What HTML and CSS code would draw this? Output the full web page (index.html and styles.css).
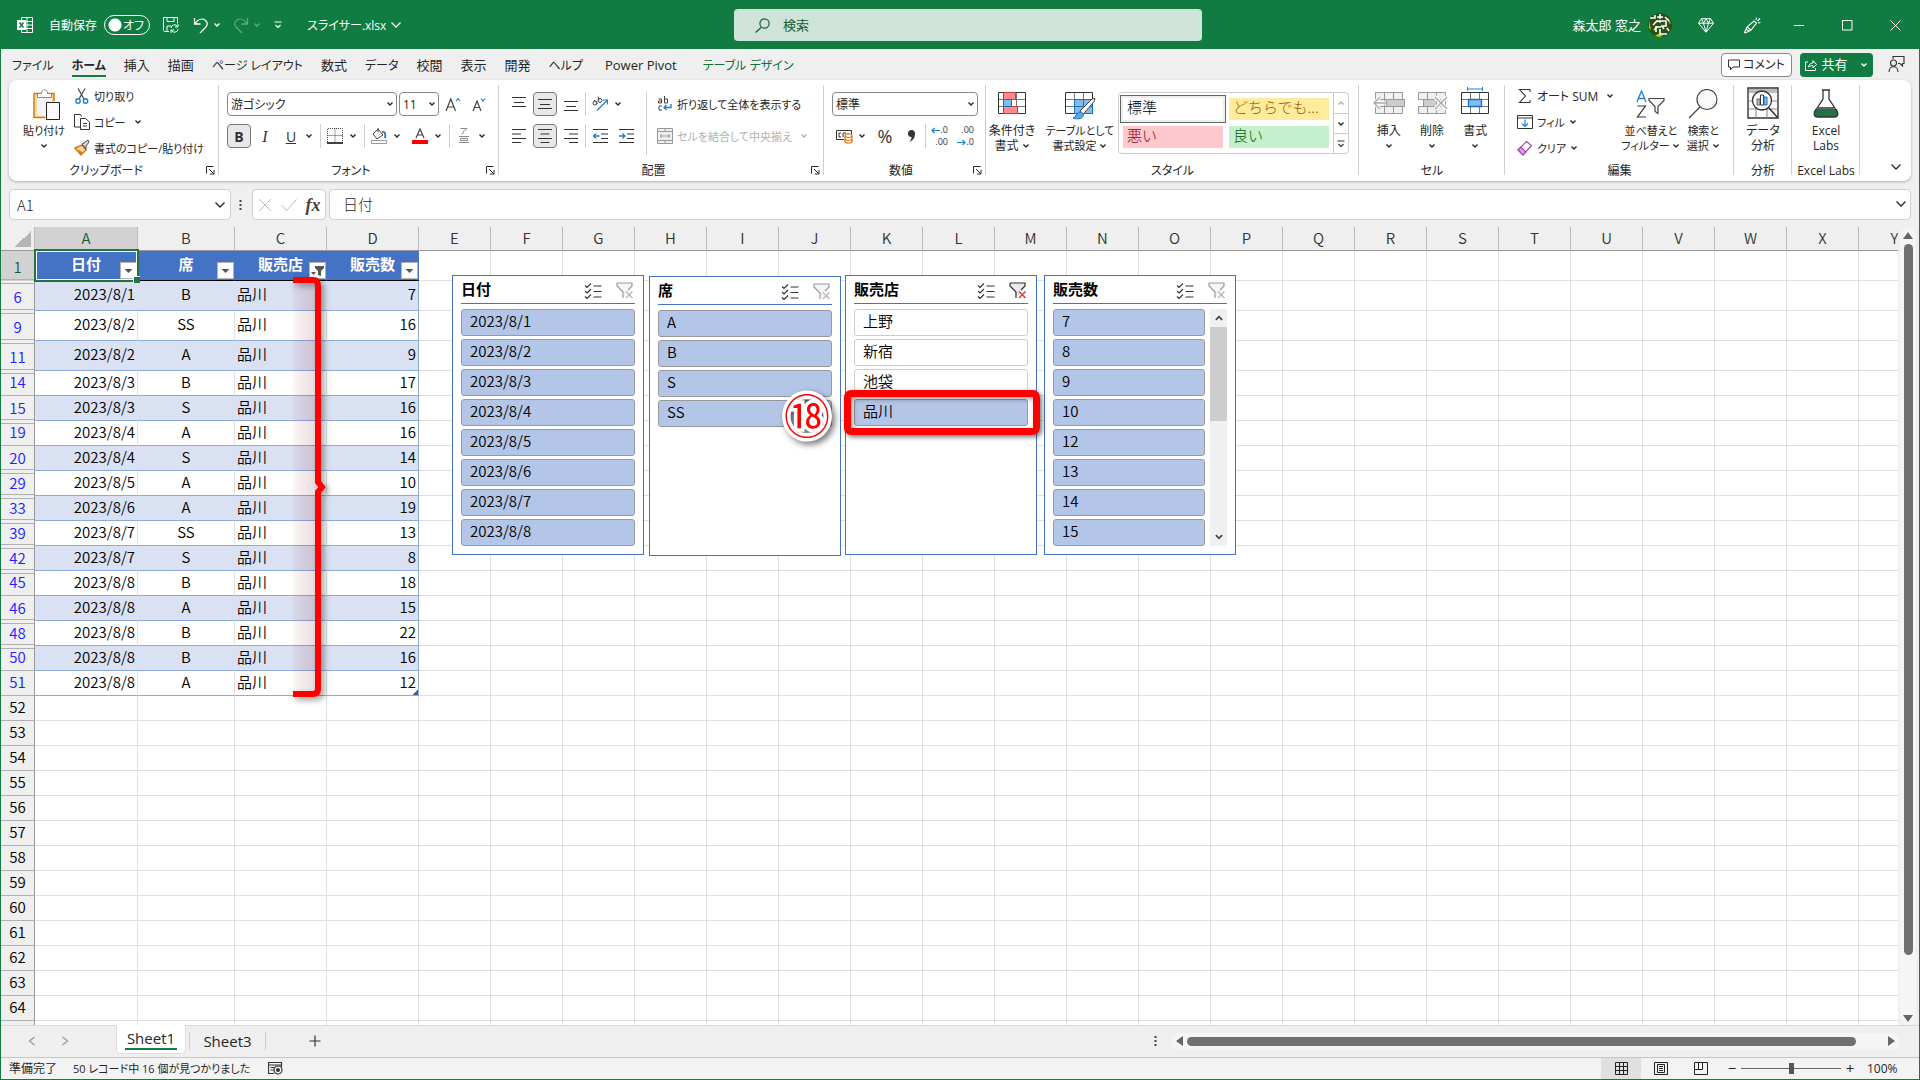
FILE: index.html
```html
<!DOCTYPE html>
<html lang="ja">
<head>
<meta charset="utf-8">
<title>スライサー.xlsx - Excel</title>
<link rel="stylesheet" href="styles.css">
</head>
<body>
<svg class="sprite" aria-hidden="true">
  <symbol id="chev" viewBox="0 0 8 8"><path d="M1.5 2.5 4 5l2.500-2.500" fill="none" stroke="currentColor" stroke-width="1.400"/></symbol>
  <symbol id="chev-lg" viewBox="0 0 12 12"><path d="M1.500 3.500 6 8l4.500-4.500" fill="none" stroke="currentColor" stroke-width="1.300"/></symbol>
  <symbol id="launch" viewBox="0 0 9 9"><path d="M.5 7.500V.5h7M3 3l4.500 4.500M8 4v4H4" fill="none" stroke="currentColor"/></symbol>
  <symbol id="check-list" viewBox="0 0 18 16"><path d="M1 3l2 2 4-4M1 8.500l2 2 4-4M1 14l2 2 4-4M9.500 3.500h8M9.500 9h8M9.500 14.500h8" fill="none" stroke="#333" stroke-width="1.100"/></symbol>
  <symbol id="clear-filter" viewBox="0 0 18 17"><path d="M1 1h15v3l-4 4M1 1v3l6 6v6" fill="none" stroke="currentColor" stroke-width="1.200"/><path d="M1 1h15v3l-5 5v3l-4 2v-4L1 4z" fill="currentColor" opacity=".1"/><path class="x" d="M10 9.500l6.500 6.500M16.500 9.500L10 16" fill="none" stroke-width="1.500"/></symbol>
  <symbol id="table-grid" viewBox="0 0 28 23"><path d="M.5.5h27v21H.5z" fill="#fff"/><path d="M9.500.5v21M18.500.5v21M.5 7.500h27M.5 14.500h27" stroke="#777" fill="none"/><path d="M.5.500h27v21H.5z" fill="none" stroke="#333"/></symbol>
</svg>

<header class="titlebar">
  <div class="title-left">
    <svg class="app" width="16" height="16" viewBox="0 0 16 16"><path d="M4.500.5h11v15h-11zM10 .5v15M4.500 4.500h11M4.500 8h11M4.500 11.500h11" fill="none" stroke="#fff"/><path d="M0 3h9v10H0z" fill="#fff"/><path d="M2.500 5.500l4 5M6.500 5.500l-4 5" stroke="#107c41" stroke-width="1.500"/></svg>
    <label class="autosave">自動保存 <input type="checkbox" role="switch"><span class="switch">オフ</span></label>
    <button class="tb save" aria-label="保存"><svg width="16" height="16" viewBox="0 0 16 16"><path d="M6 14.500H1.500L.5 13.500V.5h14v6M4 .5v4h7v-4M4 14V9h4M8 11a3.500 3.500 0 0 1 6.500-1.500M15 7v3h-3M15 12a3.500 3.500 0 0 1-6.500 1.500M8 16v-3h3" fill="none" stroke="#fff"/></svg></button>
    <button class="tb undo" aria-label="元に戻す"><svg width="16" height="17" viewBox="0 0 16 17"><path d="M1.500 1v6h6M2 6.500C5 2.500 9 1 12 3s3 5 0 8l-5 5" fill="none" stroke="#fff" stroke-width="1.300"/></svg><svg width="8" height="8"><use href="#chev"/></svg></button>
    <button class="tb undo dim" aria-label="やり直し"><svg width="16" height="17" viewBox="0 0 16 17"><path d="M14.500 1v6h-6M14 6.500C11 2.500 7 1 4 3s-3 5 0 8l5 5" fill="none" stroke="currentColor" stroke-width="1.300"/></svg><svg width="8" height="8"><use href="#chev"/></svg></button>
    <button class="tb" aria-label="カスタマイズ"><svg width="8" height="8" viewBox="0 0 8 8"><path d="M.5 1h7M1.500 4L4 6.500 6.500 4" fill="none" stroke="#fff" stroke-width="1.200"/></svg></button>
    <button class="tb filename">スライサー.xlsx <svg width="12" height="12"><use href="#chev-lg"/></svg></button>
  </div>
  <label class="search"><svg width="15" height="15" viewBox="0 0 15 15"><path d="M6 9.500L.7 14.500" stroke="#185c37" stroke-width="1.200"/><circle cx="9.500" cy="5.500" r="4.600" fill="none" stroke="#185c37" stroke-width="1.200"/></svg><input type="search" placeholder="検索" aria-label="検索"></label>
  <div class="title-right">
    <span class="user">森太郎 窓之</span>
    <svg class="avatar" width="24" height="24" viewBox="0 0 24 24"><circle cx="12" cy="12" r="12" fill="#2c4f14"/><path d="M1 7l2 10-2-2zM20 4l3 7-2-1zM7 23l3-2 5 1-3 2z" fill="#a5e000"/><path d="M2 5h5V2M9 4h6M12 1v5M5 12l4-4 4 1M9 8h9v5h-5M17 4l4 4M6 17l3-3h4M8 13v6M12 16v5h7M14 13l2 3M19 15l2 3" fill="none" stroke="#fff" stroke-width="1.600"/></svg>
    <button class="cap" aria-label="Premium"><svg width="16" height="15" viewBox="0 0 16 15"><path d="M3.500.7h9l3 4.500L8 14.300.5 5.200zM.5 5.200h15M3.500.7l2 4.500L8 14l2.500-8.800 2-4.500M5.500 5.200L8 .7l2.500 4.500" fill="none" stroke="#fff"/></svg></button>
    <button class="cap" aria-label="描画ツール"><svg width="18" height="17" viewBox="0 0 18 17"><path d="M1.500 15.500L4 10l7-6 2.500 2L8 13l-5.500 3zM4 10l4 3M3.500 12.500l3 2M13 3l.5-2.500M14.500 4L17 1.500M15 6l2.500-.5" fill="none" stroke="#fff" stroke-width="1.100"/></svg></button>
    <button class="cap" aria-label="最小化"><svg width="11" height="11" viewBox="0 0 11 11"><path d="M0 5.500h10" stroke="#fff"/></svg></button>
    <button class="cap" aria-label="元のサイズ"><svg width="11" height="11" viewBox="0 0 11 11"><path d="M.5.5h9.500v9.500H.5z" fill="none" stroke="#fff"/></svg></button>
    <button class="cap" aria-label="閉じる"><svg width="11" height="11" viewBox="0 0 11 11"><path d="M.5.5l10 10M10.500.5l-10 10" stroke="#fff"/></svg></button>
  </div>
</header>

<nav class="tabs">
  <a href="#" class="kana">ファイル</a><a href="#" class="kana on">ホーム</a><a href="#">挿入</a><a href="#">描画</a><a href="#" class="kana">ページ レイアウト</a><a href="#">数式</a><a href="#" class="kana">データ</a><a href="#">校閲</a><a href="#">表示</a><a href="#">開発</a><a href="#" class="kana">ヘルプ</a><a href="#" class="latin">Power Pivot</a><a href="#" class="kana ctx">テーブル デザイン</a>
  <div class="tab-actions">
    <button class="comment"><svg width="12" height="12" viewBox="0 0 12 12"><path d="M.5 1h11v7H5l-2.500 3V8h-2z" fill="none" stroke="#333"/></svg>コメント</button>
    <button class="share"><svg width="12" height="12" viewBox="0 0 12 12"><path d="M3 3H.5v8.500h10V9M3.500 8C4 5 6 4 8 4V1.500l3.500 4L8 9V6.500C6 6.500 5 7 3.500 8z" fill="none" stroke="#fff"/></svg><span>共有</span><svg width="8" height="8"><use href="#chev"/></svg></button>
    <button class="persona" aria-label="プレゼンス"><svg width="17" height="17" viewBox="0 0 17 17"><path d="M5 3V.5h11v7h-1.500V10L12 7.500h-2M1 16c0-7 9-7 9 0" fill="none" stroke="#333" stroke-width="1.100"/><circle cx="5.500" cy="7" r="3" fill="none" stroke="#333" stroke-width="1.100"/></svg></button>
  </div>
</nav>

<section class="ribbon">
  <div class="group g-clip">
    <div class="body">
      <button class="big paste"><svg width="28" height="32" viewBox="0 0 28 32"><path d="M1.500 5h20v24h-20z" fill="#f8dc9c"/><path d="M4 8h15v19H4z" fill="#f4f4f4"/><path d="M1 4.500h20V12M1 4.500v24h11" fill="none" stroke="#d9730a" stroke-width="1.500"/><path d="M4.500 8.500V4.500h4c0-5 6-5 6 0h4v4z" fill="#fff" stroke="#888"/><path d="M13.500 13.500h13v17h-13z" fill="#fafafa" stroke="#222"/></svg>貼り付け<svg width="8" height="8"><use href="#chev"/></svg></button>
      <div class="stack">
        <button class="row"><svg width="16" height="16" viewBox="0 0 16 16"><path d="M4 .5l6 10.500M11 .5L5 11" stroke="#444" stroke-width="1.200"/><circle cx="4" cy="13" r="2.200" fill="none" stroke="#1a82d2" stroke-width="1.400"/><circle cx="11.500" cy="13" r="2.200" fill="none" stroke="#1a82d2" stroke-width="1.400"/></svg>切り取り</button>
        <button class="row"><svg width="16" height="16" viewBox="0 0 16 16"><path d="M6 13H.5V.5h6l1 2M6.500 4.500h5l4 3.500v7.500h-9zM9 9.500h4M9 12h4" fill="none" stroke="#333"/></svg>コピー<svg class="far" width="8" height="8"><use href="#chev"/></svg></button>
        <button class="row"><svg width="16" height="16" viewBox="0 0 16 16"><path d="M1 8l7-3 4 5-5 5z" fill="#fbd9ae" stroke="#d9730a" stroke-width="1.400"/><path d="M4 9l5 4-3 2z" fill="#e07a10"/><path d="M8 4l2-1 4-3 1 2-3 4v3z" fill="#ddd" stroke="#444"/></svg>書式のコピー/貼り付け</button>
      </div>
    </div>
    <div class="label l">クリップボード<svg width="9" height="9"><use href="#launch"/></svg></div>
  </div>

  <div class="group g-font">
    <div class="body lines">
      <div class="line">
        <span class="combo w-font"><select aria-label="フォント"><option>游ゴシック</option></select><svg width="8" height="8"><use href="#chev"/></svg></span>
        <span class="combo w-size"><select aria-label="サイズ"><option>11</option></select><svg width="8" height="8"><use href="#chev"/></svg></span>
        <button class="ic" aria-label="拡大"><svg width="16" height="15" viewBox="0 0 16 15"><path d="M1 14L5.800 2 10.500 14M2.800 10h6" fill="none" stroke="#444" stroke-width="1.200"/><path d="M11 4l2-2.500L15 4" fill="none" stroke="#1a82d2" stroke-width="1.200"/></svg></button>
        <button class="ic" aria-label="縮小"><svg width="16" height="15" viewBox="0 0 16 15"><path d="M2 14L6 4l4 10M3.500 10.500h5" fill="none" stroke="#444" stroke-width="1.200"/><path d="M10 1.500L12 4l2-2.500" fill="none" stroke="#1a82d2" stroke-width="1.200"/></svg></button>
      </div>
      <div class="line">
        <button class="ic on"><b>B</b></button><button class="ic"><i>I</i></button><button class="ic"><u>U</u></button><button class="dd" aria-label="下線"><svg width="8" height="8"><use href="#chev"/></svg></button><hr>
        <button class="ic" aria-label="罫線"><svg width="16" height="16" viewBox="0 0 16 16"><path d="M.5 14V.5h15V14M8 .5V14M.5 7.500h15" fill="none" stroke="#444" stroke-dasharray="1 1"/><path d="M0 15h16" stroke="#000" stroke-width="1.500"/></svg></button><button class="dd" aria-label="罫線の種類"><svg width="8" height="8"><use href="#chev"/></svg></button><hr>
        <button class="ic" aria-label="塗りつぶし"><svg width="16" height="18" viewBox="0 0 16 18"><path d="M7 2l5 6-6 4-4-5zM7 5V1" fill="#f4f4f4" stroke="#444"/><path d="M11 5c3-1 4 2 3 6" fill="none" stroke="#1a6fc0" stroke-width="1.800"/><path d="M.5 13.500h15v3H.5z" fill="#fff" stroke="#999"/></svg></button><button class="dd" aria-label="塗りつぶしの色"><svg width="8" height="8"><use href="#chev"/></svg></button>
        <button class="ic gap" aria-label="フォントの色"><svg width="16" height="18" viewBox="0 0 16 18"><path d="M4 11L8 2l4 9M5.500 8h5" fill="none" stroke="#444" stroke-width="1.200"/><path d="M0 13h16v4H0z" fill="#f00"/></svg></button><button class="dd" aria-label="文字色"><svg width="8" height="8"><use href="#chev"/></svg></button><hr>
        <button class="ic" aria-label="ふりがな"><svg width="12" height="18" viewBox="0 0 12 18"><path d="M2.500 1.500h6.500L6.500 4M6 3.500Q6 6 3.500 7.500M1 9.500h10M2.500 11.500h7v2h-7zM1 15.500h10" fill="none" stroke="#888"/></svg></button><button class="dd" aria-label="ふりがなの設定"><svg width="8" height="8"><use href="#chev"/></svg></button>
      </div>
    </div>
    <div class="label l">フォント<svg width="9" height="9"><use href="#launch"/></svg></div>
  </div>

  <div class="group g-align">
    <div class="body">
      <div class="lines">
        <div class="line">
          <button class="ic" aria-label="上揃え"><svg width="14" height="14" viewBox="0 0 14 14"><path d="M0 .5h14M2 5.500h10M0 9.500h14" stroke="#333"/></svg></button><button class="ic on" aria-label="上下中央揃え"><svg width="14" height="14" viewBox="0 0 14 14"><path d="M0 2.500h14M2 7.500h10M0 11.500h14" stroke="#333"/></svg></button><button class="ic" aria-label="下揃え"><svg width="14" height="14" viewBox="0 0 14 14"><path d="M0 4.500h14M2 9.500h10M0 13.500h14" stroke="#333"/></svg></button><hr>
          <button class="ic" aria-label="方向"><svg width="16" height="16" viewBox="0 0 16 16"><path d="M5 14.500L15 4.500M11 4h4.500v4.500" fill="none" stroke="#1a82d2" stroke-width="1.200"/><circle cx="3" cy="7" r="2" fill="none" stroke="#444"/><circle cx="8" cy="4.500" r="2" fill="none" stroke="#444"/><path d="M2 4l3.500 4M6 .5l1 4" stroke="#444"/></svg></button><button class="dd" aria-label="方向の種類"><svg width="8" height="8"><use href="#chev"/></svg></button>
        </div>
        <div class="line">
          <button class="ic" aria-label="左揃え"><svg width="14" height="14" viewBox="0 0 14 14"><path d="M0 .5h14M0 5h9M0 9.500h14M0 13.500h9" stroke="#333"/></svg></button><button class="ic on" aria-label="中央揃え"><svg width="14" height="14" viewBox="0 0 14 14"><path d="M0 .5h14M2.500 5h9M0 9.500h14M2.500 13.500h9" stroke="#333"/></svg></button><button class="ic" aria-label="右揃え"><svg width="14" height="14" viewBox="0 0 14 14"><path d="M0 .5h14M5 5h9M0 9.500h14M5 13.500h9" stroke="#333"/></svg></button><hr>
          <button class="ic" aria-label="インデントを減らす"><svg width="15" height="14" viewBox="0 0 15 14"><path d="M0 .5h15M8 5h7M8 9.500h7M0 13.500h15" stroke="#333"/><path d="M6.500 7h-6M3 4.500L.5 7 3 9.500" fill="none" stroke="#1a82d2" stroke-width="1.300"/></svg></button><button class="ic" aria-label="インデントを増やす"><svg width="15" height="14" viewBox="0 0 15 14"><path d="M0 .5h15M8 5h7M8 9.500h7M0 13.500h15" stroke="#333"/><path d="M0 7h6M3.500 4.500L6 7 3.500 9.500" fill="none" stroke="#1a82d2" stroke-width="1.300"/></svg></button>
        </div>
      </div>
      <div class="lines wrap">
        <button class="row"><svg width="16" height="16" viewBox="0 0 16 16"><path d="M1.500 3h3v4h-3V5h3M7.500 0v7h3V3h-3M5 10H2v4h3" fill="none" stroke="#444"/><path d="M14 8v3.500H7M9.500 9L7 11.500 9.500 14" fill="none" stroke="#1a82d2" stroke-width="1.400"/></svg>折り返して全体を表示する</button>
        <button class="row" disabled><svg width="16" height="16" viewBox="0 0 16 16"><path d="M.5.5h15v15H.5zM.5 3.500h15M.5 12.500h15M8 .5v3M8 12.500v3M3 8h10M5 6L3 8l2 2M11 6l2 2-2 2" fill="#eee" stroke="#999"/></svg>セルを結合して中央揃え<svg class="near" width="8" height="8"><use href="#chev"/></svg></button>
      </div>
    </div>
    <div class="label l">配置<svg width="9" height="9"><use href="#launch"/></svg></div>
  </div>

  <div class="group g-num">
    <div class="body lines">
      <div class="line"><span class="combo w-num"><select aria-label="表示形式"><option>標準</option></select><svg width="8" height="8"><use href="#chev"/></svg></span></div>
      <div class="line">
        <button class="ic" aria-label="通貨"><svg width="17" height="15" viewBox="0 0 17 15"><path d="M8 10.500H.5v-9h15V5M5 4H3v4h2M7 8V4h3M12 4v1" fill="none" stroke="#333"/><path d="M9 6.500c0-2 7-2 7 0v6c0 2-7 2-7 0zM9 7c1 2 6 2 7 0M9 10c1 2 6 2 7 0" fill="#fff" stroke="#e07000" stroke-width="1.200"/></svg></button><button class="dd" aria-label="通貨の種類"><svg width="8" height="8"><use href="#chev"/></svg></button>
        <button class="ic gap pct">%</button><button class="ic" aria-label="桁区切り"><svg width="9" height="14" viewBox="0 0 9 14"><path d="M1.500 13c2-1 3-2.500 3-5A3.500 3.500 0 1 1 8 4.500C8 9 6 12 1.500 13z" fill="#333"/></svg></button><hr>
        <button class="ic dec"><span><svg width="9" height="7" viewBox="0 0 9 7"><path d="M9 3.500H1M3.500 1L1 3.500 3.500 6" fill="none" stroke="#1a82d2" stroke-width="1.200"/></svg>.0</span><span>.00</span></button><button class="ic dec"><span>.00</span><span><svg width="9" height="7" viewBox="0 0 9 7"><path d="M0 3.500h8M5.500 1L8 3.500 5.500 6" fill="none" stroke="#1a82d2" stroke-width="1.200"/></svg>.0</span></button>
      </div>
    </div>
    <div class="label l">数値<svg width="9" height="9"><use href="#launch"/></svg></div>
  </div>

  <div class="group g-style">
    <div class="body">
      <button class="big cond"><svg width="28" height="23" viewBox="0 0 28 23"><use href="#table-grid"/><path d="M5.500.5h12v7h-12zM5.500 14.500h14v7h-14z" fill="#ff8a90" stroke="#d13438"/><path d="M5.500 7.500h8v7h-8z" fill="#83bdec" stroke="#1a6fc0"/></svg><span>条件付き<br>書式 <svg width="8" height="8"><use href="#chev"/></svg></span></button>
      <button class="big fmt"><svg width="31" height="28" viewBox="0 0 31 28"><svg width="28" height="23"><use href="#table-grid"/></svg><path d="M9.500 7.500h18v14h-18z" fill="#83bdec" stroke="#1a6fc0"/><path d="M18.500 7v15M9 14.500h18" stroke="#1a6fc0"/><path d="M15 19L27 7l3-.500-1 3-11 13z" fill="#fff" stroke="#444"/><path d="M8 26c3 0 3-6 7-6s5 5 0 6.500c-2 .5-5 .5-7-.5z" fill="#5aa7e6" stroke="#1a6fc0"/></svg><span>テーブルとして<br>書式設定 <svg width="8" height="8"><use href="#chev"/></svg></span></button>
      <div class="gallery">
        <div class="swatches"><button class="s-norm">標準</button><button class="s-neu">どちらでも...</button><button class="s-bad">悪い</button><button class="s-good">良い</button></div>
        <div class="gal-nav"><button class="dim" aria-label="上へ"><svg class="flip" width="8" height="8"><use href="#chev"/></svg></button><button aria-label="下へ"><svg width="8" height="8"><use href="#chev"/></svg></button><button aria-label="その他"><svg width="8" height="8" viewBox="0 0 8 8"><path d="M.5 1h7M1.500 4L4 6.500 6.500 4" fill="none" stroke="#333" stroke-width="1.200"/></svg></button></div>
      </div>
    </div>
    <div class="label">スタイル</div>
  </div>

  <div class="group g-cell">
    <div class="body">
      <button class="big cell"><svg width="32" height="23" viewBox="0 0 32 23"><path d="M2.500.5h27v21h-27zM11.500.5v21M20.500.5v21M2.500 7.500h27M2.500 14.500h27" fill="#f0f0f0" stroke="#999"/><path d="M13.500 7.500h18v7h-18z" fill="#ccc" stroke="#999"/><path d="M13 11H1M7 5l-6 6 6 6" fill="none" stroke="#fff" stroke-width="3.500"/><path d="M13 11H1.500M7 5l-6 6 6 6" fill="none" stroke="#aaa" stroke-width="1.500"/></svg>挿入<svg width="8" height="8"><use href="#chev"/></svg></button>
      <button class="big cell"><svg width="32" height="23" viewBox="0 0 32 23"><path d="M2.500.5h27v21h-27zM11.500.5v21M20.500.5v21M2.500 7.500h27M2.500 14.500h27" fill="#f0f0f0" stroke="#999"/><path d="M0 8h7v6H0z" fill="#fff"/><path d="M7.500 7.500h13v7h-13z" fill="#ccc" stroke="#999"/><path d="M19 5l12 12M31 5L19 17" stroke="#fff" stroke-width="4"/><path d="M19 5l12 12M31 5L19 17" stroke="#aaa" stroke-width="1.500"/></svg>削除<svg width="8" height="8"><use href="#chev"/></svg></button>
      <button class="big cell tall"><svg width="28" height="28" viewBox="0 0 28 28"><path d="M6.500 2h15M6.500 0v4M21.500 0v4" stroke="#1a82d2"/><svg y="5" width="28" height="23"><use href="#table-grid"/></svg><path d="M7.500 12.500h13v7h-13z" fill="#83bdec" stroke="#1a6fc0" stroke-width="1.300"/></svg>書式<svg width="8" height="8"><use href="#chev"/></svg></button>
    </div>
    <div class="label">セル</div>
  </div>

  <div class="group g-edit">
    <div class="body">
      <div class="stack">
        <button class="row"><svg width="16" height="16" viewBox="0 0 16 16"><path d="M13 4V1.500H2.500L8.500 8l-6 6.500H13V12" fill="none" stroke="#333" stroke-width="1.100"/></svg><span class="sum">オート SUM</span><svg class="far" width="8" height="8"><use href="#chev"/></svg></button>
        <button class="row"><svg width="16" height="16" viewBox="0 0 16 16"><path d="M.5 1.500h15v13H.5zM.5 4h15" fill="none" stroke="#333"/><path d="M8 5.500v7M5 9.500l3 3 3-3" fill="none" stroke="#1a82d2" stroke-width="1.200"/></svg>フィル<svg width="8" height="8"><use href="#chev"/></svg></button>
        <button class="row"><svg width="16" height="16" viewBox="0 0 16 16"><path d="M1 10L9.500 1.500l5 4L6 15z" fill="#fff" stroke="#a347b0" stroke-width="1.200"/><path d="M1 10l3-3 5 5-3 3z" fill="#d99fe0" stroke="#a347b0" stroke-width="1.200"/></svg>クリア<svg width="8" height="8"><use href="#chev"/></svg></button>
      </div>
      <button class="big sort"><svg width="29" height="28" viewBox="0 0 29 28"><path d="M1 12L5.500 1 10 12M2.500 8.500h6" fill="none" stroke="#1a82d2" stroke-width="1.300"/><path d="M1.500 16h8l-8 11h8.500" fill="none" stroke="#333" stroke-width="1.200"/><path d="M13 8.500h15v2l-6 6v7l-3-2v-5l-6-6z" fill="#fafafa" stroke="#444" stroke-width="1.200"/></svg><span>並べ替えと<br>フィルター <svg width="8" height="8"><use href="#chev"/></svg></span></button>
      <button class="big find"><svg width="30" height="30" viewBox="0 0 30 30"><circle cx="19" cy="10.500" r="10" fill="#fafafa" stroke="#444" stroke-width="1.200"/><path d="M12 18L1 29" stroke="#444" stroke-width="1.300"/></svg><span>検索と<br>選択 <svg width="8" height="8"><use href="#chev"/></svg></span></button>
    </div>
    <div class="label">編集</div>
  </div>

  <div class="group g-an">
    <div class="body"><button class="big an"><svg width="32" height="32" viewBox="0 0 32 32"><path d="M1 1h30v30H1z" fill="#fafafa" stroke="#333" stroke-width="1.400"/><path d="M2 2h28v4H2z" fill="#bbb"/><path d="M1 14h30M1 22h30M9 6v25M20 6v25" stroke="#888"/><circle cx="15" cy="13.500" r="9.500" fill="#fff" stroke="#333" stroke-width="1.300"/><path d="M10 12h3v6h-3z" fill="#bbb" stroke="#666"/><path d="M13.500 8h3v10h-3z" fill="#fff" stroke="#333"/><path d="M17 10h3v8h-3z" fill="#83bdec" stroke="#1a6fc0"/><path d="M22 21l9 10" stroke="#333" stroke-width="1.500"/></svg><span>データ<br>分析</span></button></div>
    <div class="label">分析</div>
  </div>
  <div class="group g-labs">
    <div class="body"><button class="big an"><svg width="26" height="30" viewBox="0 0 26 30"><path d="M2 20h22l1 5c0 2-1 3-3 3H4c-2 0-3-1-3-3z" fill="#217346"/><path d="M9 1h8M10 1v9L1.500 23c-1 3 0 5 3 5h17c3 0 4-2 3-5L16 10V1M5 19h16" fill="none" stroke="#333" stroke-width="1.300"/></svg><span>Excel<br>Labs</span></button></div>
    <div class="label">Excel Labs</div>
  </div>
  <button class="collapse" aria-label="リボンを折りたたむ"><svg width="12" height="12"><use href="#chev-lg"/></svg></button>
</section>

<section class="formula">
  <label class="namebox"><input value="A1" aria-label="名前ボックス"><svg width="12" height="12"><use href="#chev-lg"/></svg></label>
  <svg width="3" height="12" viewBox="0 0 3 12"><path d="M.5 1h2v2h-2zM.5 5h2v2h-2zM.5 9h2v2h-2z" fill="#444"/></svg>
  <div class="fx">
    <button aria-label="キャンセル"><svg width="14" height="14" viewBox="0 0 14 14"><path d="M1 1l12 12M13 1L1 13" stroke="#bbb"/></svg></button>
    <button aria-label="入力"><svg width="16" height="12" viewBox="0 0 16 12"><path d="M.5 6l5 5.500L15.500.5" fill="none" stroke="#bbb"/></svg></button>
    <button class="fxb">fx</button>
  </div>
  <label class="fbar"><input value="日付" aria-label="数式バー"><svg width="12" height="12"><use href="#chev-lg"/></svg></label>
</section>

<main class="work">
  <div class="canvas">
    <table class="sheet"><colgroup></colgroup><thead></thead><tbody></tbody></table>
    <div class="active"></div>
    <svg class="bracket" width="40" height="440" viewBox="0 0 40 440">
      <defs><linearGradient id="pink"><stop offset="0" stop-color="#c00000" stop-opacity=".04"/><stop offset="1" stop-color="#900020" stop-opacity=".1"/></linearGradient></defs>
      <path d="M0 6h24v412H0z" fill="url(#pink)"/>
      <path d="M0 3h20q5 0 5 6v196l4 5-4 5v197q0 5-5 5H0" fill="none" stroke="#f00" stroke-width="6"/>
    </svg>
    <section class="slicer s1"><h2>日付</h2></section>
    <section class="slicer s2"><h2>席</h2></section>
    <section class="slicer s3"><h2>販売店</h2></section>
    <section class="slicer s4"><h2>販売数</h2></section>
    <div class="mark"></div>
    <div class="step">⑱</div>
  </div>
  <div class="vscroll"><i class="up"></i><div class="track"><div class="thumb"></div></div><i class="down"></i></div>
</main>

<footer class="sheetbar">
  <div class="nav"><button aria-label="前のシート"><svg width="8" height="10" viewBox="0 0 8 10"><path d="M6.500 1L1.500 5l5 4" fill="none" stroke="#999" stroke-width="1.300"/></svg></button><button aria-label="次のシート"><svg width="8" height="10" viewBox="0 0 8 10"><path d="M1.500 1l5 4-5 4" fill="none" stroke="#999" stroke-width="1.300"/></svg></button></div>
  <button class="st on"><span>Sheet1</span></button><button class="st">Sheet3</button>
  <button class="add" aria-label="新しいシート"><svg width="12" height="12" viewBox="0 0 12 12"><path d="M6 .5v11M.5 6h11" stroke="#333" stroke-width="1.200"/></svg></button>
  <div class="hwrap"><svg width="3" height="12" viewBox="0 0 3 12"><path d="M.5 1h2v2h-2zM.5 5h2v2h-2zM.5 9h2v2h-2z" fill="#444"/></svg>
  <div class="hscroll"><i class="left"></i><div class="track"><div class="thumb"></div></div><i class="right"></i></div></div>
</footer>
<footer class="status">
  <span>準備完了</span><span class="found">50 レコード中 16 個が見つかりました</span>
  <svg width="15" height="13" viewBox="0 0 15 13"><path d="M6 11.500H.5V.5h13V5M.5 3h13M2.500 5.500h4M2.500 8h3" fill="none" stroke="#333" stroke-width="1.200"/><circle cx="10" cy="8" r="4" fill="none" stroke="#333" stroke-width="1.200"/><circle cx="10" cy="8" r="2" fill="#333"/></svg>
  <div class="views">
    <button class="on" aria-label="標準"><svg width="13" height="13" viewBox="0 0 13 13"><path d="M.5.5h12v12H.5zM4.500.5v12M8.500.5v12M.5 4.500h12M.5 8.500h12" fill="none" stroke="#222"/></svg></button>
    <button aria-label="ページ レイアウト"><svg width="14" height="13" viewBox="0 0 14 13"><path d="M.5.5h13v12H.5zM3.500 2.500h7v8h-7zM5 4.500h4M5 6.500h4M5 8.500h4" fill="none" stroke="#222"/></svg></button>
    <button aria-label="改ページ プレビュー"><svg width="14" height="13" viewBox="0 0 14 13"><path d="M.5.5h13v12H.5zM.5 7.500h8v-7M4.500.5v7" fill="none" stroke="#222"/></svg></button>
  </div>
  <div class="zoom"><button>−</button><input type="range" min="0" max="100" value="50" aria-label="ズーム"><button>+</button><span>100%</span></div>
</footer>
<script src="script.js"></script>
</body>
</html>
```
FILE: styles.css
```css
* { box-sizing: border-box; }
html, body { height: 100%; margin: 0; }
body {
  display: flex; flex-direction: column; overflow: hidden;
  border: 1px solid #107c41; border-top: 0; background: #efefef; color: #262626;
  font: 12px/15px "Open Sans", "Noto Sans CJK JP", sans-serif;
  font-feature-settings: "palt";
}
button, input, select { font: inherit; font-feature-settings: inherit; color: inherit; margin: 0; padding: 0; border: 0; background: none; outline: 0; }
button { display: flex; align-items: center; justify-content: center; white-space: nowrap; }
svg { flex: none; display: block; }
.sprite { position: absolute; width: 0; height: 0; }

/* title bar */
.titlebar { display: flex; flex: none; height: 49px; padding-top: 1px; align-items: center; background: #107c41; color: #fff; }
.title-left { flex: 1; display: flex; align-items: center; padding-left: 16px; }
.autosave { display: flex; align-items: center; gap: 7px; margin-left: 16px; }
.autosave input { position: absolute; opacity: 0; }
.switch { display: flex; align-items: center; justify-content: flex-end; width: 46px; height: 20px; padding-right: 5px; border: 1px solid #fff; border-radius: 10px; background: radial-gradient(circle at 10px 9px, #fff 6px, transparent 7px); }
.tb { gap: 4px; color: #fff; margin-left: 14px; }
.tb.save { margin-left: 13px; }
.tb.dim { color: #5fa980; margin-left: 12px; }
.tb.dim + .tb { margin-left: 13px; }
.tb.filename { margin-left: 25px; }
.search { display: flex; align-items: center; gap: 13px; flex: 0 1 468px; height: 32px; padding: 0 21px; border-radius: 4px; background: #cfe3d8; color: #185c37; }
.search input { flex: 1; font-size: 13px; }
.search input::placeholder { color: #185c37; opacity: 1; }
.title-right { flex: 1; display: flex; align-items: center; justify-content: flex-end; }
.user { font-size: 13px; }
.avatar { margin: 0 11px 0 7px; }
.cap { width: 48px; height: 48px; }
.cap:nth-of-type(1), .cap:nth-of-type(2) { width: 46px; }

/* tabs */
.tabs { display: flex; flex: none; align-items: center; gap: 18px; height: 31px; padding: 0 14px 0 11px; font-size: 13px; }
.tabs a { color: inherit; text-decoration: none; white-space: nowrap; padding: 6px 0 2px; border-bottom: 2px solid transparent; }
.tabs a.kana { font-size: 12px; }
.tabs a.on { font-weight: 700; border-color: #107c41; }
.tabs a.latin { margin-left: 4px; }
.tabs a.ctx { color: #0f703b; margin-left: 8px; }
.tab-actions { display: flex; align-items: center; gap: 8px; margin-left: auto; }
.comment { gap: 3px; width: 71px; height: 24px; border: 1px solid #888; border-radius: 4px; background: #fff; font-size: 12px; }
.share { gap: 4px; width: 73px; height: 24px; border-radius: 4px; background: #107c41; color: #fff; }
.share span { margin-right: 8px; }
.persona { margin-left: 7px; }

/* ribbon */
.ribbon { display: flex; flex: none; height: 101px; margin: 0 8px; border-radius: 8px; background: #fff; box-shadow: 0 1px 3px #0004; overflow: hidden; }
.group { position: relative; display: flex; flex-direction: column; flex: none; padding: 7px 8px 3px; }
.group::after { content: ""; position: absolute; right: 0; top: 5px; bottom: 6px; width: 1px; background: #d0d0d0; }
.body { display: flex; flex: 1; }
.label { display: flex; justify-content: center; align-items: center; height: 15px; }
.label.l { padding-right: 16px; }
.label svg { position: absolute; right: 4px; }
.g-clip { width: 210px; }
.g-font { width: 280px; }
.g-align { width: 325px; }
.g-num { width: 162px; padding-right: 0; }
.g-style { width: 373px; }
.g-cell { width: 146px; }
.g-edit { width: 229px; }
.g-an { width: 58px; padding-left: 0; padding-right: 0; }
.g-labs { width: 68px; padding-left: 0; padding-right: 0; }
.g-an .body, .g-labs .body, .g-cell .body { justify-content: center; }
.big { flex-direction: column; justify-content: flex-start; line-height: 15px; }
.big > span { display: block; text-align: center; }
.big span svg { display: inline-block; vertical-align: 0; }
.big > svg:last-child { margin-top: 4px; }
.row, .paste, .fmt, .sort, .find { font-size: 11px; }
.paste { width: 54px; padding-top: 2px; }
.paste > svg:first-child { margin: 0 0 2px 6px; }
.stack { display: flex; flex-direction: column; gap: 10px; padding: 1px 0 0 3px; }
.row { gap: 4px; height: 16px; justify-content: flex-start; }
.row .far { margin-left: 4px; }
.row .near { margin-left: 4px; }
.sum { font-size: 12px; }
.row[disabled] { color: #b0b0b0; }
.lines { display: flex; flex-direction: column; gap: 8px; padding-top: 5px; }
.g-font .lines, .g-num .lines { flex: 1; }
.line { display: flex; align-items: center; height: 24px; }
.line hr { width: 1px; height: 24px; margin: 0 2px 0 5px; border: 0; background: #d0d0d0; }
.ic { flex: none; width: 24px; height: 24px; margin-right: 2px; border-radius: 4px; color: #333; font-size: 14px; }
.ic + .dd { margin-left: -2px; }
.ic + hr { margin-left: 0; }
.ic.on { border: 1px solid #777; background: #e8e8e8; }
.ic i { font-family: "Liberation Serif", serif; font-size: 16px; }
.dd { flex: none; width: 12px; height: 24px; }
.gap { margin-left: 5px; }
.pct { font-size: 18px; }
.dec { flex-direction: column; align-items: flex-end; padding-right: 4px; font: 9px/12px "Open Sans", sans-serif; }
.dec span { display: flex; align-items: center; }
.combo { position: relative; display: flex; flex: none; align-items: center; height: 24px; margin-right: 2px; border: 1px solid #888; border-radius: 4px; }
.combo select { flex: 1; width: 100%; height: 100%; padding-left: 3px; appearance: none; }
.combo svg { position: absolute; right: 2px; pointer-events: none; }
.w-font { width: 170px; }
.w-size { width: 40px; }
.w-num { width: 146px; }
.wrap { gap: 16px; margin: 4px 0 8px 6px; padding: 5px 0 0 10px; border-left: 1px solid #d0d0d0; }
.cond { width: 52px; padding-top: 5px; margin-right: 7px; }
.cond > svg, .fmt > svg { margin-bottom: 8px; }
.fmt { width: 70px; padding-top: 5px; margin-right: 3px; }
.fmt > svg { margin-bottom: 3px; }
.gallery { display: flex; height: 62px; margin: 5px 2px 0 0; border: 1px solid #ccc; border-radius: 4px; }
.g-style .body { justify-content: flex-end; margin-left: -8px; }
.swatches { display: grid; grid-template-columns: 106px 106px; grid-template-rows: 28px 28px; padding: 2px 1px; }
.swatches button { display: flex; align-items: flex-start; justify-content: flex-start; margin: 3px; padding-left: 4px; font: 15px/18px "Noto Sans CJK JP", sans-serif; font-weight: 300; }
.swatches .s-norm { align-items: center; margin: 0; padding: 0 0 4px 6px; border: 1px solid #666; outline: 2px solid #eee; outline-offset: -3px; color: #000; }
.s-neu { background: #ffeb9c; color: #9c5700; }
.s-bad { background: #ffc7ce; color: #9c0006; }
.s-good { background: #c6efce; color: #006100; }
.gal-nav { display: grid; grid-template-rows: repeat(3, 1fr); width: 15px; border-left: 1px solid #ccc; }
.gal-nav button + button { border-top: 1px solid #ccc; }
.gal-nav .dim { color: #aaa; }
.flip { transform: rotate(180deg); }
.cell { width: 44px; padding-top: 5px; }
.cell > svg:first-child { margin-bottom: 8px; }
.cell.tall { padding-top: 0; }
.g-edit .stack { padding-left: 4px; width: 114px; }
.sort { width: 60px; padding-top: 3px; }
.sort > svg { margin-bottom: 5px; }
.find { width: 48px; padding-top: 2px; }
.find > svg { margin-bottom: 4px; }
.an > svg { margin-bottom: 4px; }
.g-labs .an { padding-top: 2px; }
.collapse { margin: auto 9px 8px auto; }

/* formula bar */
.formula { display: flex; flex: none; align-items: center; height: 31px; margin: 8px 8px 7px; font: 15px/20px "Noto Sans CJK JP", sans-serif; font-weight: 300; }
.namebox, .fx, .fbar { display: flex; align-items: center; height: 31px; border: 1px solid #d0d0d0; border-radius: 4px; background: #fff; }
.namebox { width: 222px; padding: 0 4px 0 7px; margin-right: 8px; }
.namebox input, .fbar input { flex: 1; min-width: 0; }
.fx { width: 74px; margin: 0 3px 0 10px; justify-content: space-around; }
.fxb { font: italic 700 18px/20px "Liberation Serif", serif; color: #444; }
.fbar { flex: 1; padding: 0 3px 2px 13px; }

/* worksheet */
.work { display: flex; flex: 1; min-height: 0; }
.canvas { position: relative; flex: 1; min-width: 0; overflow: hidden; background: #fff; font: 15px/20px "Noto Sans CJK JP", sans-serif; font-feature-settings: normal; font-weight: 350; color: #000; }
.sheet { border-collapse: separate; border-spacing: 0; table-layout: fixed; width: 0; }
.sheet th, .sheet td { height: 25px; padding: 0 2px; overflow: hidden; border: 0 solid #e0e0e0; border-width: 0 1px 1px 0; line-height: 20px; font-weight: 350; white-space: nowrap; }
.c-h { width: 34px; } .c-a { width: 103px; } .c-b { width: 97px; } .c-c { width: 92px; } .c-n { width: 72px; }
.sheet thead th { height: 24px; padding-bottom: 1px; background: #efefef; border-color: #999 #bbb; color: #333; }
.sheet thead .sel, .sheet tbody th.sel { background-color: #d2d2d2; color: #185c37; }
.sheet thead th.corner { background: linear-gradient(135deg, transparent 50%, #b4b4b4 0) 14px 4px / 16px 16px no-repeat #efefef; }
.sheet tbody th { background-color: #efefef; border-color: #b0b0b0 #999; padding-bottom: 2px; }
.sheet tbody .hit th { color: #2020ff; }
.sheet tbody .hit th.sel { color: #185c37; }
.sheet tbody td { padding-bottom: 2px; }
.sheet .high th, .sheet .high td { height: 30px; }
.sheet .high th { padding-top: 3px; }
.sheet .high td { padding-bottom: 3px; }
.sheet th.cut { border-bottom: 0; background-image: linear-gradient(#b0b0b0, #b0b0b0); background-size: 100% 1px; background-position: 0 calc(100% - 1px); background-repeat: no-repeat; }
.sheet th.after { box-shadow: inset 0 2px #efefef, inset 0 3px #b0b0b0; }
.hit td { border-bottom-color: #8ea9db; }
.hit td:nth-child(2), .hit td:nth-child(5) { text-align: right; }
.hit td:nth-child(3) { text-align: center; }
.hit td:nth-child(5) { border-right-color: #8ea9db; }
.hit td:nth-child(n+6) { border-bottom-color: #e0e0e0; }
.band td:nth-child(-n+5) { background: #d9e1f2; }
.band td:nth-child(-n+4) { border-right-color: #d9e1f2; }
.last td:nth-child(5) { background: linear-gradient(135deg, transparent 50%, #3c5fb0 0) 100% 100% / 5px 5px no-repeat; }
.sheet .names td:nth-child(-n+5) { position: relative; background: #4472c4; border-color: #4472c4 #4472c4 #000; color: #fff; font-weight: 700; text-align: center; }
.drop { position: absolute; right: 0; bottom: 1px; width: 17px; height: 17px; border: 1px solid #b4b4b4; background: #fff; }
.active { position: absolute; left: 33px; top: 22px; width: 105px; height: 33px; border: 2px solid #217346; outline: 1px solid #fff; outline-offset: -3px; }
.active::after { content: ""; position: absolute; right: -3px; bottom: -3px; width: 6px; height: 6px; background: #217346; border: 1px solid #fff; border-width: 1px 0 0 1px; }
.bracket { position: absolute; left: 292px; top: 50px; filter: drop-shadow(3px 3px 3px #0006); }
.slicer { position: absolute; top: 48px; width: 192px; height: 280px; padding: 4px 8px; border: 1px solid #4472c4; background: #fff; }
.s1 { left: 451px; } .s2 { left: 648px; top: 49px; } .s3 { left: 844px; } .s4 { left: 1043px; }
.slicer header { display: flex; align-items: center; gap: 14px; height: 24px; padding: 0 1px 2px 0; border-bottom: 1px solid #4472c4; margin-bottom: 5px; }
.slicer h2 { margin: 0 auto 4px 0; font-size: 15px; line-height: 20px; font-weight: 700; }
.slicer header svg { color: #999; }
.slicer header .x { stroke: #bbb; }
.slicer .active-filter { color: #333; }
.slicer .active-filter .x { stroke: #e03c31; }
.list { display: flex; gap: 5px; }
.items { flex: 1; display: flex; flex-direction: column; gap: 3px; }
.items button { height: 27px; padding: 0 0 3px 8px; justify-content: flex-start; border: 1px solid #999; border-radius: 3px; background: #b4c6e7; }
.items button.off { background: #fff; border-color: #ccc; }
.sbar { display: flex; flex-direction: column; align-items: center; width: 17px; height: 237px; background: #f0f0f0; color: #444; }
.sbar div { width: 17px; height: 94px; margin: 0 0 auto; background: #cdcdcd; }
.sbar svg { margin: 4px 0; }
.mark { position: absolute; left: 843px; top: 163px; width: 196px; height: 45px; border: 7px solid #f00; border-radius: 7px; box-shadow: 2px 2px 5px #0008, inset 2px 2px 5px #0006; }
.step { position: absolute; left: 782px; top: 162px; width: 48px; font-size: 46px; line-height: 48px; font-weight: 400; text-align: center; color: #f00; -webkit-text-stroke: 7px #fff; paint-order: stroke fill; filter: drop-shadow(3px 3px 3px #0008); }

/* scroll bars */
.vscroll { display: flex; flex-direction: column; align-items: center; width: 16px; margin: 1px 3px 0 2px; padding: 4px 0 3px; border-radius: 8px; background: #f5f5f5; }
.track { flex: 1; }
.vscroll .track { width: 9px; margin: 5px 0 7px; }
.vscroll .thumb { height: 93%; border-radius: 5px; background: #707070; }
.up, .down, .left, .right { width: 0; height: 0; border: 5px solid transparent; }
.up { border-top: 0; border-bottom: 7px solid #666; }
.down { border-bottom: 0; border-top: 7px solid #666; }
.left { border-left: 0; border-right: 7px solid #666; }
.right { border-right: 0; border-left: 7px solid #666; }

/* sheet tabs */
.sheetbar { display: flex; flex: none; height: 32px; border-top: 1px solid #d8d8d8; font-size: 15px; line-height: 20px; }
.nav { display: flex; justify-content: center; gap: 25px; width: 115px; padding: 0 36px 2px 16px; }
.st { width: 77px; border-right: 1px solid #ccc; height: 18px; margin: 6px 0; }
.st.on { width: 70px; height: 29px; margin: -1px 3px 0 0; border: 1px solid #ddd; border-top: 0; border-radius: 0 0 5px 5px; background: #fff; }
.st.on span { border-bottom: 2px solid #107c41; padding: 0 2px; }
.st.on + .st { border-left: 1px solid #ccc; }
.add { margin: 0 0 2px 43px; }
.hwrap { display: flex; align-items: center; gap: 15px; flex: 0 1 765px; margin-left: auto; padding-bottom: 1px; }
.hscroll { flex: 1; display: flex; align-items: center; height: 17px; padding: 0 4px; margin-right: 20px; border-radius: 8px; background: #f5f5f5; }
.hscroll .track { margin: 0 4px; }
.hscroll .thumb { width: 96%; height: 9px; border-radius: 5px; background: #707070; }

/* status bar */
.status { display: flex; flex: none; align-items: center; height: 23px; padding-left: 8px; border-top: 1px solid #c6c6c6; border-bottom: 1px solid #107c41; background: #f3f3f3; }
.status { margin-bottom: -1px; }
.found { margin: 0 18px 0 16px; font-size: 11px; }
.views { display: flex; align-self: stretch; margin-left: auto; }
.views button { width: 40px; }
.views .on { background: #e0e0e0; }
.zoom { display: flex; align-items: center; gap: 4px; width: 198px; padding-left: 6px; }
.zoom button { flex: none; width: 10px; font-size: 15px; }
.zoom span { margin-left: 8px; }
.zoom input { flex: none; width: 100px; height: 16px; appearance: none; background: linear-gradient(#666, #666) 0 50% / 100% 1px no-repeat; }
.zoom input::-webkit-slider-thumb { appearance: none; width: 5px; height: 11px; background: #555; }
```
FILE: script.js
```js
const store = '品川';
// [row, date, seat, count, rows hidden below it]
const records = [
  [6, '2023/8/1', 'B', 7, 1], [9, '2023/8/2', 'SS', 16, 1], [11, '2023/8/2', 'A', 9, 1],
  [14, '2023/8/3', 'B', 17, 0], [15, '2023/8/3', 'S', 16, 1], [19, '2023/8/4', 'A', 16, 0],
  [20, '2023/8/4', 'S', 14, 1], [29, '2023/8/5', 'A', 10, 1], [33, '2023/8/6', 'A', 19, 1],
  [39, '2023/8/7', 'SS', 13, 1], [42, '2023/8/7', 'S', 8, 1], [45, '2023/8/8', 'B', 18, 0],
  [46, '2023/8/8', 'A', 15, 1], [48, '2023/8/8', 'B', 22, 1], [50, '2023/8/8', 'B', 16, 0],
  [51, '2023/8/8', 'A', 12, 0]
];
const arrow = '<svg width="15" height="15" viewBox="0 0 15 15"><path d="M3.500 6h8l-4 4z" fill="#555"/></svg>';
const funnel = '<svg width="15" height="15" viewBox="0 0 15 15"><path d="M5 3h9v2l-3 3v5l-3-1V8L5 5zM1 9h5l-2.500 3z" fill="#555"/></svg>';
const blanks = n => '<td></td>'.repeat(n);
const sheet = document.querySelector('.sheet');

// Enough columns and rows to cover the canvas: the first four columns and 17 rows hold the data.
const canvas = document.querySelector('.canvas');
const extra = Math.max(1, Math.ceil((canvas.clientWidth - 418) / 72));
const dataBottom = 24 + 4 * 30 + 13 * 25;
const emptyRows = Math.max(0, Math.ceil((canvas.clientHeight - dataBottom) / 25));
const letter = i => (i > 25 ? letter(Math.floor(i / 26) - 1) : '') + String.fromCharCode(65 + i % 26);
const letters = Array.from({ length: 4 + extra }, (_, i) => letter(i));

sheet.querySelector('colgroup').innerHTML = '<col class="c-h"><col class="c-a"><col class="c-b"><col class="c-c"><col class="c-c">'
  + '<col class="c-n">'.repeat(extra);
sheet.tHead.innerHTML = '<tr><th class="corner"></th>'
  + letters.map((l, i) => `<th${i ? '' : ' class="sel"'}>${l}</th>`).join('') + '</tr>';

let html = '<tr class="names hit high"><th class="sel cut">1</th>'
  + ['日付', '席', '販売店', '販売数'].map((t, i) =>
    `<td>${t}<button class="drop" aria-label="${t}の絞り込み">${i === 2 ? funnel : arrow}</button></td>`).join('')
  + blanks(extra) + '</tr>';
let hidden = 1;
records.forEach(([row, date, seat, count, next], i) => {
  const cls = ['hit', i % 2 ? '' : 'band', i < 3 ? 'high' : '', row === 51 ? 'last' : ''].join(' ');
  html += `<tr class="${cls}"><th class="${next ? 'cut ' : ''}${hidden ? 'after' : ''}">${row}</th>`
    + `<td>${date}</td><td>${seat}</td><td>${store}</td><td>${count}</td>${blanks(extra)}</tr>`;
  hidden = next;
});
for (let r = 0; r < emptyRows; r++) {
  html += `<tr><th>${r < emptyRows - 1 ? 52 + r : ''}</th>${blanks(4 + extra)}</tr>`;
}
sheet.tBodies[0].innerHTML = html;

const slicers = {
  s1: [1, 2, 3, 4, 5, 6, 7, 8].map(d => '2023/8/' + d),
  s2: ['A', 'B', 'S', 'SS'],
  s3: ['上野', '新宿', '池袋', store],
  s4: [7, 8, 9, 10, 12, 13, 14, 15]
};
for (const [id, items] of Object.entries(slicers)) {
  const box = document.querySelector('.' + id);
  const head = document.createElement('header');
  head.append(box.querySelector('h2'));
  head.insertAdjacentHTML('beforeend', '<svg width="18" height="17"><use href="#check-list"/></svg>'
    + `<svg class="${id === 's3' ? 'active-filter' : ''}" width="18" height="17" viewBox="0 0 18 17">${document.querySelector('#clear-filter').innerHTML}</svg>`);
  box.append(head);
  box.insertAdjacentHTML('beforeend', '<div class="list"><div class="items">'
    + items.map(t => `<button class="${id === 's3' && t !== store ? 'off' : ''}">${t}</button>`).join('') + '</div>'
    + (id === 's4' ? '<div class="sbar"><svg class="flip" width="10" height="10" viewBox="0 0 8 8"><use href="#chev"/></svg><div></div><svg width="10" height="10" viewBox="0 0 8 8"><use href="#chev"/></svg></div>' : '')
    + '</div>');
}
```
